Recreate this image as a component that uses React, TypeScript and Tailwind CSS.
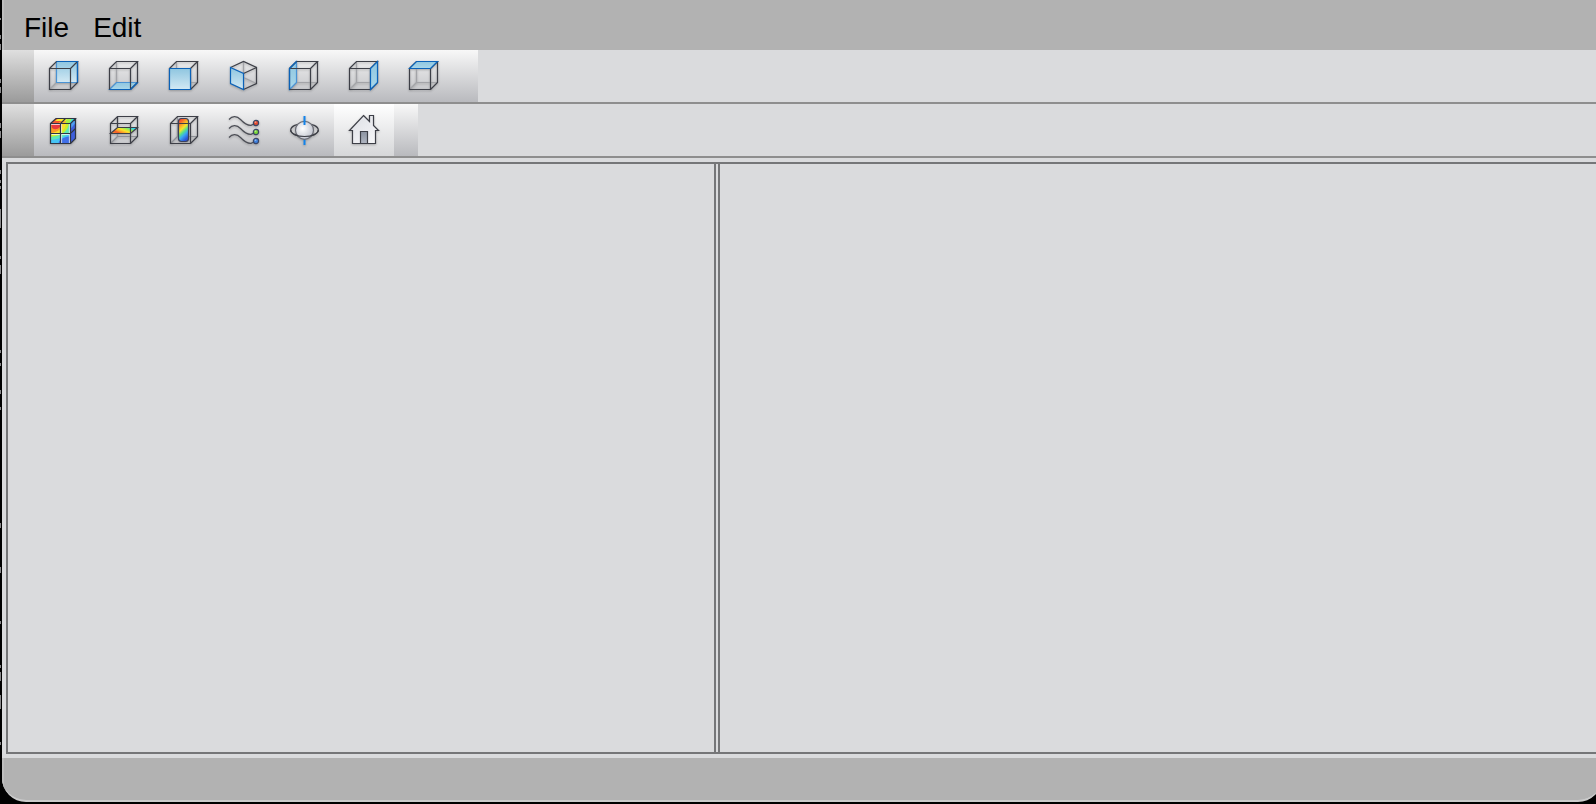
import React from 'react';
import { clsx } from 'clsx';

interface Tool {
  id: string;
  label: string;
  icon: React.ReactNode;
  active?: boolean;
}

const INK = '#3d3f47';
const BLUE = '#0b62b8';

// front face 1.5..22.5 / 8.5..29.5, back face shifted by (7, -7)
const FACES = {
  front: '1.5,8.5 22.5,8.5 22.5,29.5 1.5,29.5',
  back: '8.5,1.5 29.5,1.5 29.5,22.5 8.5,22.5',
  left: '1.5,8.5 8.5,1.5 8.5,22.5 1.5,29.5',
  right: '22.5,8.5 29.5,1.5 29.5,22.5 22.5,29.5',
  top: '1.5,8.5 8.5,1.5 29.5,1.5 22.5,8.5',
  bottom: '1.5,29.5 8.5,22.5 29.5,22.5 22.5,29.5',
};

type Face = keyof typeof FACES;

function Icon({ children }: { children: React.ReactNode }) {
  return (
    <svg
      className="h-8 w-8 drop-shadow-[0_1px_1px_rgba(0,0,0,0.25)]"
      viewBox="0 0 32 32"
      fill="none"
      strokeWidth="1.2"
      aria-hidden="true"
    >
      {children}
    </svg>
  );
}

function CubeIcon({ face }: { face: Face }) {
  const gradient = `face-${face}`;
  const hidden = 'M8.5 2V22.5H29M8.5 22.5L2 29';
  const outline = 'M1.5 8.5H22.5V29.5H1.5ZM1.5 8.5L8.5 1.5H29.5L22.5 8.5M29.5 1.5V22.5L22.5 29.5';
  const behind = face === 'back' || face === 'left' || face === 'bottom';

  return (
    <Icon>
      <defs>
        <linearGradient id={gradient} x1="0" y1="0" x2="0" y2="1">
          <stop offset="0" stopColor="#8fc6e0" />
          <stop offset="1" stopColor={face === 'front' || face === 'back' ? '#d3e9f4' : '#a9d7ea'} />
        </linearGradient>
      </defs>
      <path d={hidden} stroke="#a3a4a8" />
      {behind && <polygon points={FACES[face]} fill={`url(#${gradient})`} stroke="#4b93d4" />}
      <path d={outline} stroke={INK} />
      {face === 'back' && <path d="M8.5 1.5H29.5V22.5" stroke={BLUE} />}
      {face === 'left' && <path d="M8.5 1.5L1.5 8.5V29.5" stroke={BLUE} />}
      {face === 'bottom' && <path d="M1.5 29.5H22.5L29.5 22.5" stroke={BLUE} />}
      {!behind && <polygon points={FACES[face]} fill={`url(#${gradient})`} stroke={BLUE} />}
    </Icon>
  );
}

function IsoIcon() {
  return (
    <Icon>
      <defs>
        <linearGradient id="iso" x1="0" y1="0" x2="0" y2="1">
          <stop offset="0" stopColor="#8fc6e0" />
          <stop offset="1" stopColor="#d3e9f4" />
        </linearGradient>
      </defs>
      <path d="M15.5 2V17.5L28.5 23.5M15.5 17.5L2.5 23.5" stroke="#a3a4a8" />
      <path d="M2.5 7.5L15.5 1.5L28.5 7.5V23.5L15.5 29.5M28.5 7.5L15.5 13.5" stroke={INK} />
      <path d="M2.5 7.5L15.5 13.5V29.5L2.5 23.5Z" fill="url(#iso)" stroke={BLUE} />
    </Icon>
  );
}

function ContourIcon() {
  return (
    <Icon>
      <defs>
        <clipPath id="contour-front">
          <path d="M2.5 9.5H22.5V29.5H2.5Z" />
        </clipPath>
        <clipPath id="contour-top">
          <path d="M2.5 9.5L8 4.5H27.5L22.5 9.5Z" />
        </clipPath>
      </defs>
      <g clipPath="url(#contour-front)">
        <path d="M2 9H23V30H2Z" fill="#3f6fe8" />
        <path d="M2 30V9H23V22Q12 23 10 30Z" fill="#45c4f5" />
        <path d="M2 26V9H23V18Q14 25 2 26Z" fill="#5fe8b4" />
        <path d="M2 23V9H21Q20 21 2 23Z" fill="#c9ee2e" />
        <path d="M2 21V9H18Q18 19 2 21Z" fill="#fbe02b" />
        <path d="M2 19V9H14Q14 18 2 19Z" fill="#f99a27" />
        <path d="M3 9H12V13Q8 17 4 14Z" fill="#e8393f" />
      </g>
      <g clipPath="url(#contour-top)">
        <path d="M2 4H28V10H2Z" fill="#f9b42a" />
        <path d="M8 4L18 4L9 10H2Z" fill="#f4572f" />
        <path d="M11 4H21L19 7L7 7Z" fill="#f8ea2d" />
        <path d="M19 4H28L23 10H17Z" fill="#a6ef46" />
        <path d="M24 4H28L23 10H21Z" fill="#3fe0dc" />
      </g>
      <path d="M22.5 9.5L27.5 4.5V24.5L22.5 29.5Z" fill="#3f5fdc" />
      <path d="M22.5 9.5L27.5 4.5V9L22.5 15Z" fill="#4e9cf0" />
      <path d="M3 10.5H12M21.5 10V29M3.5 20.5H22M13.5 10V29" stroke="#fff" strokeOpacity="0.7" />
      <path
        d="M2.5 9.5H22.5V29.5H2.5ZM2.5 9.5L8 4.5H27.5L22.5 9.5M27.5 4.5V24.5L22.5 29.5M12.5 9.5V29.5M2.5 19.5H22.5L27.5 14.5M12.5 9.5L17.5 4.5"
        stroke="#2f3544"
      />
    </Icon>
  );
}

function CutPlaneIcon() {
  return (
    <Icon>
      <defs>
        <linearGradient id="cut" x1="0" y1="1" x2="1" y2="0.4">
          <stop offset="0" stopColor="#f9a327" />
          <stop offset="0.28" stopColor="#f45a2b" />
          <stop offset="0.4" stopColor="#fb9c27" />
          <stop offset="0.6" stopColor="#fbe52b" />
          <stop offset="0.8" stopColor="#8eef59" />
          <stop offset="1" stopColor="#2fd2f5" />
        </linearGradient>
      </defs>
      <path d="M9.5 3V22.5H29M9.5 22.5L3 29" stroke="#8e9096" />
      <path d="M2.5 19.5L9.5 13.5H29.5L22.5 19.5Z" fill="url(#cut)" stroke={INK} />
      <path
        d="M2.5 9.5H22.5V29.5H2.5ZM2.5 9.5L9.5 2.5H29.5L22.5 9.5M29.5 2.5V22.5L22.5 29.5M9.5 2.5V13"
        stroke={INK}
      />
    </Icon>
  );
}

function IsoSurfaceIcon() {
  return (
    <Icon>
      <defs>
        <linearGradient id="tube" x1="0.1" y1="0" x2="0.5" y2="1">
          <stop offset="0" stopColor="#f5362b" />
          <stop offset="0.18" stopColor="#f7692b" />
          <stop offset="0.3" stopColor="#fba427" />
          <stop offset="0.48" stopColor="#f4e62c" />
          <stop offset="0.64" stopColor="#54e08c" />
          <stop offset="0.78" stopColor="#3aa7f4" />
          <stop offset="1" stopColor="#2c55d8" />
        </linearGradient>
      </defs>
      <path d="M9.5 3V22.5H29M9.5 22.5L3 29" stroke="#8e9096" />
      <rect x="10.5" y="4.5" width="10" height="23" rx="3" fill="url(#tube)" stroke="#39405a" />
      <path
        d="M2.5 9.5H22.5V29.5H2.5ZM2.5 9.5L9.5 2.5H29.5L22.5 9.5M29.5 2.5V22.5L22.5 29.5"
        stroke={INK}
      />
    </Icon>
  );
}

function StreamlinesIcon() {
  const lines = [
    { y: 9, color: '#e84a2c' },
    { y: 18, color: '#7ada35' },
    { y: 27, color: '#3f82e0' },
  ];
  return (
    <Icon>
      {lines.map(({ y, color }) => (
        <g key={y} transform={`translate(0 ${y})`}>
          <path d="M1 -3.5C4 -6.8 8.5 -7.8 12.5 -3.5S19 2.5 23 2.3L26 1" stroke="#4c4e56" />
          <circle cx="28" cy="0" r="2.6" fill={color} stroke="#3a4565" />
          <circle cx="27.5" cy="-0.8" r="0.9" fill="#fff" fillOpacity="0.4" />
        </g>
      ))}
    </Icon>
  );
}

function OrbitIcon() {
  return (
    <Icon>
      <defs>
        <radialGradient id="ball" cx="0.4" cy="0.4" r="0.6">
          <stop offset="0" stopColor="#ffffff" />
          <stop offset="1" stopColor="#c3c6d0" />
        </radialGradient>
      </defs>
      <path d="M16.5 25V31" stroke="#1283ea" strokeWidth="2" />
      <ellipse cx="16.5" cy="16" rx="13.8" ry="6.5" stroke={INK} />
      <circle cx="16.5" cy="16.3" r="9" fill="url(#ball)" stroke="#6a6c75" />
      <path d="M2.7 16C2.7 19.6 8.9 22.5 16.5 22.5S30.3 19.6 30.3 16" stroke={INK} />
      <path d="M16.5 2V11" stroke="#1283ea" strokeWidth="2" />
    </Icon>
  );
}

function HomeIcon() {
  return (
    <Icon>
      <defs>
        <linearGradient id="wall" x1="0" y1="0" x2="1" y2="1">
          <stop offset="0" stopColor="#dcdee4" />
          <stop offset="1" stopColor="#f8f8fa" />
        </linearGradient>
        <linearGradient id="door" x1="0" y1="0" x2="0" y2="1">
          <stop offset="0" stopColor="#8b92a0" />
          <stop offset="1" stopColor="#b0b6c2" />
        </linearGradient>
      </defs>
      <path
        d="M15.5 1.5L21.5 7.5V1.5H25.5V11.5L30.5 16.5H27.5V29.5H4.5V16.5H1.5Z"
        fill="url(#wall)"
        stroke={INK}
      />
      <path d="M12.5 29.5V17.5H19.5V29.5Z" fill="url(#door)" stroke={INK} />
    </Icon>
  );
}

const viewTools: Tool[] = [
  { id: 'back', label: 'Back view', icon: <CubeIcon face="back" /> },
  { id: 'bottom', label: 'Bottom view', icon: <CubeIcon face="bottom" /> },
  { id: 'front', label: 'Front view', icon: <CubeIcon face="front" /> },
  { id: 'iso', label: 'Isometric view', icon: <IsoIcon /> },
  { id: 'left', label: 'Left view', icon: <CubeIcon face="left" /> },
  { id: 'right', label: 'Right view', icon: <CubeIcon face="right" /> },
  { id: 'top', label: 'Top view', icon: <CubeIcon face="top" /> },
];

const resultTools: Tool[] = [
  { id: 'contour', label: 'Contour', icon: <ContourIcon /> },
  { id: 'cut', label: 'Cut plane', icon: <CutPlaneIcon /> },
  { id: 'isosurface', label: 'Isosurface', icon: <IsoSurfaceIcon /> },
  { id: 'streamlines', label: 'Streamlines', icon: <StreamlinesIcon /> },
  { id: 'orbit', label: 'Orbit', icon: <OrbitIcon /> },
  { id: 'home', label: 'Home', icon: <HomeIcon />, active: true },
];

function Toolbar({ label, tools }: { label: string; tools: Tool[] }) {
  return (
    <div role="toolbar" aria-label={label} className="flex border-b-2 border-[#8e8e8e]">
      {/* Drag handle */}
      <div className="w-8 bg-linear-to-b from-[#dfdfdf] to-[#9b9b9b]" />
      <div className="flex bg-linear-to-b from-[#f8f8f8] to-[#b9babe] pr-6">
        {tools.map((tool) => (
          <button
            key={tool.id}
            type="button"
            aria-label={tool.label}
            aria-pressed={tool.active}
            className={clsx(
              'flex h-13 w-15 items-center justify-center',
              tool.active && 'bg-linear-to-b from-white to-[#d6d7d9]'
            )}
          >
            {tool.icon}
          </button>
        ))}
      </div>
    </div>
  );
}

// Sliver of the terminal window that sits behind this one
function DesktopEdge() {
  return (
    <svg className="h-full w-0.5 shrink-0" aria-hidden="true">
      <path
        d="M0.5 18V20M0.5 35V39M0.5 44V50M0.5 79V83M0.5 87V93M0.5 123V128M0.5 131V138M0.5 170V174M0.5 180V183M0.5 186V189M0.5 209V228M0.5 256V259M0.5 265V274M0.5 350V353M0.5 363V366M0.5 390V394M0.5 407V410M0.5 523V528M0.5 567V573M0.5 621V624M0.5 665V668M0.5 672V681M0.5 695V709M0.5 742V745"
        stroke="#8a8a8c"
      />
    </svg>
  );
}

export default function App() {
  return (
    <div className="flex h-screen overflow-hidden bg-black pb-0.5 font-['Liberation_Sans',Arial,sans-serif]">
      <DesktopEdge />
      <div className="-mr-1.5 flex h-full min-w-0 flex-1 flex-col overflow-hidden rounded-b-3xl border-b-2 border-[#cbcbcb] bg-[#dadbdd]">
        <nav
          aria-label="Main menu"
          className="flex h-[50px] items-center gap-6 border-l-2 border-[#bebebe] bg-[#b2b2b2] px-5 pt-1.5 text-[28px] leading-8 text-black"
        >
          <button type="button">File</button>
          <button type="button">Edit</button>
        </nav>

        <Toolbar label="Views" tools={viewTools} />
        <Toolbar label="Results" tools={resultTools} />

        <main className="flex flex-1 py-1 pl-1">
          <div className="flex flex-1 border-2 border-r-0 border-[#757678]">
            <section aria-label="Model tree" className="w-[706px] shrink-0" />
            <div role="separator" aria-orientation="vertical" className="w-1.5 border-x-2 border-[#757678]" />
            <section aria-label="Viewport" className="flex-1" />
          </div>
        </main>

        <footer className="h-[42px] border-l-2 border-[#bebebe] bg-[#b2b2b2]" />
      </div>
    </div>
  );
}
